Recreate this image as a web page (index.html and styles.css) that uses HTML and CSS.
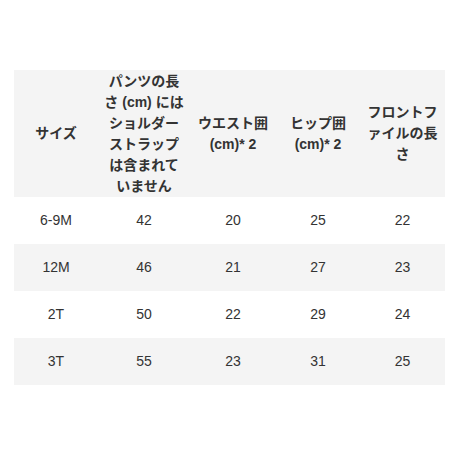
FILE: index.html
```html
<!DOCTYPE html>
<html lang="ja">
<head>
<meta charset="utf-8">
<link rel="stylesheet" href="styles.css">
</head>
<body>
<table class="size-table">
  <colgroup>
    <col class="c1"><col class="c2"><col class="c3"><col class="c4"><col class="c5">
  </colgroup>
  <thead>
    <tr>
      <th>サイズ</th>
      <th>パンツの長<br>さ (cm) には<br>ショルダー<br>ストラップ<br>は含まれて<br>いません</th>
      <th>ウエスト囲<br>(cm)* 2</th>
      <th>ヒップ囲<br>(cm)* 2</th>
      <th>フロントフ<br>ァイルの長<br>さ</th>
    </tr>
  </thead>
  <tbody>
    <tr><td>6-9M</td><td>42</td><td>20</td><td>25</td><td>22</td></tr>
    <tr class="alt"><td>12M</td><td>46</td><td>21</td><td>27</td><td>23</td></tr>
    <tr><td>2T</td><td>50</td><td>22</td><td>29</td><td>24</td></tr>
    <tr class="alt"><td>3T</td><td>55</td><td>23</td><td>31</td><td>25</td></tr>
  </tbody>
</table>
</body>
</html>
```

FILE: styles.css
```css
html, body {
  margin: 0;
  padding: 0;
  background: #ffffff;
}
body {
  padding: 70px 15px 0 14px;
  font-family: "Liberation Sans", "Noto Sans CJK JP", sans-serif;
  color: #333333;
}
.size-table {
  width: 431px;
  border-collapse: collapse;
  border-spacing: 0;
  table-layout: fixed;
  font-size: 14px;
  line-height: 21px;
}
.c1 { width: 84px; }
.c2 { width: 92px; }
.c3 { width: 86px; }
.c4 { width: 84px; }
.c5 { width: 85px; }
.size-table th {
  background: #f4f4f4;
  font-weight: bold;
  color: #333333;
  text-align: center;
  vertical-align: middle;
  height: 127px;
  padding: 0 2px;
  box-sizing: border-box;
}
.size-table td {
  text-align: center;
  vertical-align: middle;
  height: 47px;
  padding: 0 2px;
  box-sizing: border-box;
  color: #333333;
}
.size-table tr.alt td {
  background: #f4f4f4;
}
```
